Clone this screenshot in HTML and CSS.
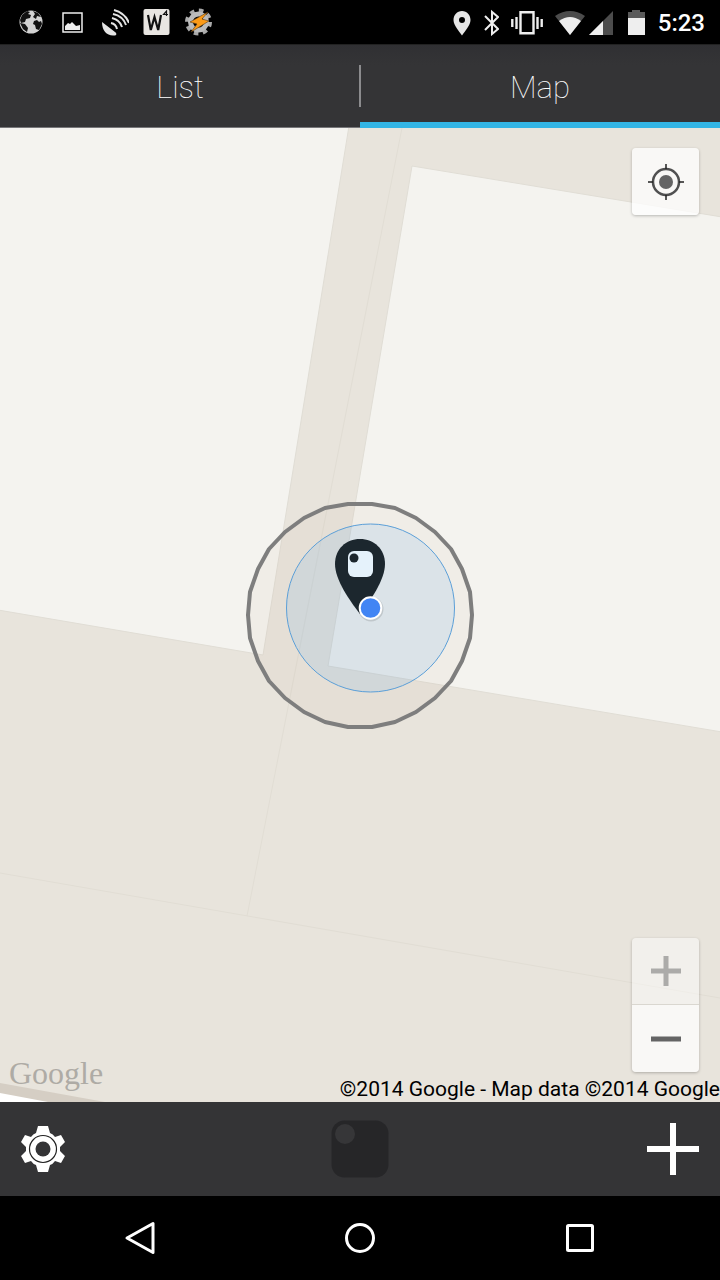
FILE: index.html
```html
<!DOCTYPE html>
<html lang="en">
<head>
<meta charset="utf-8">
<meta name="viewport" content="width=device-width, initial-scale=1">
<title>Map</title>
<link rel="stylesheet" href="styles.css">
</head>
<body>
<div class="screen">
  <header class="status">
    <div class="status-group notifications">
      <svg width="28" height="28" viewBox="0 0 28 28"><circle cx="14" cy="14" r="11.500" fill="#d2d2d2"/><path fill="#111" d="M5 7l5-4 3 1-2 2 3 1-1 3-4 1-1 3-4 1-1-3zM16 3l5 2 3 4-4-1-1 3-3-2 2-3zM3 15l5 1 3 4-1 4-4-3zM17 13l3-1 2 2 2-1 1 3-3 6-3-1-1-4-2-1z"/></svg>
      <svg width="28" height="28" viewBox="0 0 28 28"><path fill="none" stroke="#eee" stroke-width="1.500" d="M4 5h19v19H4z"/><path fill="#eee" d="M6 22v-4l3-3 2 1 2-2 4 4 4-1v5z"/></svg>
      <svg width="28" height="28" viewBox="0 0 28 28"><path fill="#e4e4e4" d="M1 14c0 9 5 14 12 13.500 3 0 3-2 1-3.500z"/><path fill="none" stroke="#e4e4e4" stroke-width="2" d="M10 15q5 1 6 6M11 10q8 2 10 9M12 6q10 2 13 11M13 2q11 3 15 13"/></svg>
      <svg width="28" height="28" viewBox="0 0 28 28"><rect x=".5" y="1" width="26" height="26" rx="2" fill="#e9e6e2"/><path fill="none" stroke="#111" stroke-width="2.200" d="M5 7l2.800 15L11.500 9l3.700 13L18 7"/><path fill="none" stroke="#111" stroke-width="1.200" d="M23.500 8V3l-3 3.500h4.500"/></svg>
      <svg width="28" height="28" viewBox="0 0 28 28"><circle cx="13.500" cy="14" r="11" fill="none" stroke="#aaa" stroke-width="5" stroke-dasharray="4.320 4.320"/><circle cx="13.500" cy="14" r="8" fill="none" stroke="#bbb" stroke-width="5"/><path fill="#fb9a17" stroke="#5b3b14" stroke-width=".6" d="M23 4L5 14l7 2-6 8 18-11-7-2z"/></svg>
    </div>
    <div class="status-group system">
      <svg width="18" height="28" viewBox="0 0 18 28"><path fill="#e6e6e6" fill-rule="evenodd" d="M9 3c5 0 8.500 4 8.500 9S12 23 9 27.500C6 23 .5 17 .5 12S4 3 9 3zM9 9a3 3 0 1 0 0 6 3 3 0 0 0 0-6z"/></svg>
      <svg width="16" height="28" viewBox="0 0 16 28"><path fill="none" stroke="#eee" stroke-width="2" d="M2 8l13 13-6 5V4l6 5L2 22"/></svg>
      <svg class="vibrate" width="32" height="28" viewBox="0 0 32 28"><path fill="none" stroke="#eee" stroke-width="2.400" d="M9.500 4.200h13v21h-13zM5.500 9v12M1.300 11v8M26.500 9v12M30.700 11v8"/></svg>
      <div class="signal">
        <svg width="32" height="28" viewBox="0 0 32 28"><path fill="#4c4c4c" d="M0 8Q15-2 30 8L15 27z"/><path fill="#eee" d="M4 13q11-8 22 0L15 27z"/></svg>
        <svg width="28" height="28" viewBox="0 0 28 28"><path fill="#4c4c4c" d="M25 3v24H1z"/><path fill="#eee" d="M15 13v14H1z"/></svg>
      </div>
      <svg width="18" height="28" viewBox="0 0 18 28"><path fill="#5a5a5a" d="M0 4h4V2h8v2h5v6H0z"/><path fill="#eee" d="M0 10h17v17H0z"/></svg>
      <time class="clock">5:23</time>
    </div>
  </header>

  <nav class="tabs">
    <button class="tab" type="button">List</button>
    <button class="tab tab-active" type="button" aria-current="page">Map</button>
  </nav>

  <main class="map">
    <svg class="map-canvas" viewBox="0 0 720 974" preserveAspectRatio="xMidYMid slice" aria-hidden="true">
      <path fill="#e8e4dc" d="M0 0h720v974H0z"/>
      <path fill="#f4f3ef" stroke="#e0ddd5" d="M-2-2H349L263 527L-2 482zM412 38L722 89V604L328 538z"/>
      <path fill="none" stroke="#e1ddd4" d="M402 0L247 788M0 745L720 870"/>
      <path fill="#d5cec4" d="M0 955L105 974H0z"/>
      <path fill="#fff" d="M0 965L48 974H0z"/>
      <path transform="translate(360 487)" fill="#ba9470" fill-opacity=".06" stroke="#7e7e7e" stroke-width="4" stroke-linejoin="round" d="M112 0L110 23 102 46 91 66 75 83 56 97 35 107 12 112-12 112-35 107-56 97-75 83-91 66-102 46-110 23-112 0-110-23-102-46-91-66-75-83-56-97-35-107-12-111 12-111 35-107 56-97 75-83 91-66 102-46 110-23z"/>
      <circle cx="370.500" cy="480" r="84" fill="#4a9ff0" fill-opacity=".13" stroke="#5b9fd8"/>
      <path fill="#1c272e" d="M360 411c14 0 25 10 25 25 0 16-15 37-25 50-10-13-25-34-25-50 0-15 11-25 25-25z"/>
      <rect x="348" y="423" width="25" height="26" rx="6" fill="#e5f2fb"/>
      <circle cx="354" cy="430" r="4.500" fill="#1c272e"/>
      <circle cx="371" cy="481" r="12.500" fill="#000" opacity=".12"/>
      <circle cx="370.500" cy="480" r="10.800" fill="#4285f4" stroke="#fff" stroke-width="2"/>
    </svg>
    <button class="map-button locate" type="button" aria-label="My location">
      <svg width="40" height="40" viewBox="0 0 40 40"><circle cx="20" cy="20" r="13" fill="none" stroke="#505050" stroke-width="2.500"/><circle cx="20" cy="20" r="7" fill="#646464"/><path stroke="#222" stroke-width="1.500" d="M20 2v5M20 33v5M2 20h5M33 20h5"/></svg>
    </button>
    <div class="zoom">
      <button class="map-button zoom-in" type="button" aria-label="Zoom in"><svg width="30" height="30" viewBox="0 0 30 30"><path stroke="#acaba9" stroke-width="5" d="M0 15h30M15 0v30"/></svg></button>
      <button class="map-button zoom-out" type="button" aria-label="Zoom out"><svg width="30" height="30" viewBox="0 0 30 30"><path stroke="#646464" stroke-width="5" d="M0 15h30"/></svg></button>
    </div>
    <span class="wordmark">Google</span>
    <span class="credits">©2014 Google - Map data ©2014 Google</span>
  </main>

  <footer class="toolbar">
    <button class="tool" type="button" aria-label="Settings">
      <svg width="46" height="48" viewBox="-23 -24 46 48"><path fill="#fff" d="M-5-23H5L7-16Q10-15 12-12L18-14L22-7L17-2V2L22 7L18 14L12 12Q10 15 7 16L5 23H-5L-7 16Q-10 15-12 12L-18 14L-22 7L-17 2V-2L-22-7L-18-14L-12-12Q-10-15-7-16z"/><circle r="13.500" fill="#fff" stroke="#222" stroke-width="1.200"/><circle r="7.500" fill="#343436"/></svg>
    </button>
    <button class="tool" type="button" aria-label="Tile">
      <svg width="58" height="58" viewBox="0 0 58 58"><rect x=".5" y=".5" width="57" height="57" rx="13" fill="#262628"/><circle cx="14" cy="14" r="10" fill="#363638"/></svg>
    </button>
    <button class="tool tool-end" type="button" aria-label="Add">
      <svg width="54" height="54" viewBox="0 0 54 54"><path stroke="#fff" stroke-width="6" d="M1 27h52M27 1v52"/></svg>
    </button>
  </footer>

  <nav class="system-nav">
    <button class="nav-key" type="button" aria-label="Back"><svg width="36" height="36" viewBox="0 0 36 36"><path fill="none" stroke="#fff" stroke-width="3" stroke-linejoin="round" d="M31 3.500v29L5 18z"/></svg></button>
    <button class="nav-key" type="button" aria-label="Home"><svg width="36" height="36" viewBox="0 0 36 36"><circle cx="18" cy="18" r="13.500" fill="none" stroke="#fff" stroke-width="3"/></svg></button>
    <button class="nav-key" type="button" aria-label="Recent apps"><svg width="36" height="36" viewBox="0 0 36 36"><rect x="5.500" y="5.500" width="25" height="25" rx="1" fill="none" stroke="#fff" stroke-width="3"/></svg></button>
  </nav>
</div>
</body>
</html>
```
FILE: styles.css
```css
* { box-sizing: border-box; }
body { margin: 0; background: #000; font-family: Roboto, "Liberation Sans", sans-serif; }
button { margin: 0; padding: 0; border: 0; background: none; color: inherit; font: inherit; }
svg { display: block; flex: none; }

.screen { display: flex; flex-direction: column; min-height: 100vh; }

.status { display: flex; justify-content: space-between; align-items: center; height: 44px; padding: 0 15px 0 17px; background: #000; color: #fff; }
.status-group { display: flex; align-items: center; }
.notifications { gap: 14px; }
.system { gap: 12px; }
.signal { display: flex; gap: 1px; }
.clock { padding-top: 2px; font-size: 24px; font-weight: 500; line-height: 28px; }

.tabs { display: flex; height: 84px; background: linear-gradient(#303033, #343436 20px); border-top: 1px solid #222; color: #fff; }
.tab { position: relative; flex: 1; padding-top: 4px; border-bottom: 1px solid #77777a; font-size: 31px; font-weight: 100; line-height: 40px; }
.tab-active { border-bottom: 6px solid #33b5e5; padding-top: 9px; }
.tab-active::before { content: ""; position: absolute; left: -1px; top: 20px; width: 2px; height: 42px; background: #8c8c8e; }

.map { position: relative; flex: 1; overflow: hidden; background: #e8e4dc; }
.map-canvas { position: absolute; inset: 0; width: 100%; height: 100%; }
.map-button { display: flex; align-items: center; justify-content: center; width: 67px; height: 67px; background: rgba(255, 255, 255, .75); }
.locate { position: absolute; top: 20px; right: 21px; border-radius: 4px; box-shadow: 0 1px 3px rgba(0, 0, 0, .25); }
.zoom { position: absolute; right: 21px; bottom: 30px; border-radius: 4px; overflow: hidden; box-shadow: 0 1px 3px rgba(0, 0, 0, .25); }
.zoom-in { background: rgba(255, 255, 255, .45); border-bottom: 1px solid #dad7d0; }
.wordmark { position: absolute; left: 9px; bottom: 11px; color: #aeaba5; font-family: "Liberation Serif", serif; font-size: 32px; line-height: 36px; }
.credits { position: absolute; right: 0; bottom: 0; color: #000; font-size: 21px; line-height: 26px; white-space: nowrap; }

.toolbar { display: grid; grid-template-columns: 1fr auto 1fr; align-items: center; height: 94px; padding: 0 20px; background: #343436; }
.tool { justify-self: start; }
.tool-end { justify-self: end; }

.system-nav { display: flex; justify-content: center; align-items: center; gap: 184px; height: 84px; background: #000; }
```
